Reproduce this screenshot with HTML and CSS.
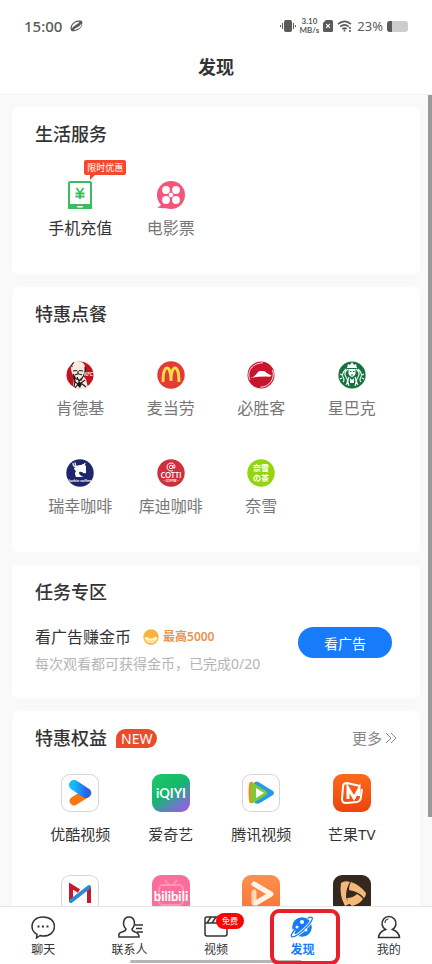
FILE: index.html
```html
<!DOCTYPE html>
<html lang="zh-CN">
    <head>
        <meta charset="UTF-8" />
        <meta name="viewport" content="width=device-width, initial-scale=1.0" />
        <title>发现</title>
        <link rel="stylesheet" href="styles.css">
    </head>
    <body>
        <header>
            <div class="status-bar">
                <span class="time">15:00</span>
                <svg class="leaf" width="13" height="12" viewBox="0 0 13 12" fill="#5a5a5a">
                    <path d="M1.500 11C-.5 9 .5 4.500 4 2.200 7 .3 11 .3 12 1.200c1 2 0 6-3 8s-6 2.600-7.500 1.800Z" />
                    <path d="M1.800 8.500C1.500 5 5 1.500 9.500 1.800 8.500 4 4.500 5 1.800 8.500ZM11.500 3.500c.3 4-4 6.500-8 6.300C5 8 9 7.500 11.500 3.500Z" fill="#fff" />
                </svg>
                <div class="status-right">
                    <svg width="16" height="14" viewBox="0 0 16 14" fill="#5a5a5a">
                        <rect x="4" y="1" width="8" height="12" rx="2" />
                        <path d="M2 4h1v6H2zM0 6h1v2H0zM13 4h1v6h-1zM15 6h1v2h-1z" />
                    </svg>
                    <span class="speed"><span>3.10</span><span>MB/s</span></span>
                    <svg width="10" height="12" viewBox="0 0 10 12">
                        <path d="M3 0h5.500Q10 0 10 1.500v9Q10 12 8.500 12h-7Q0 12 0 10.500V3Z" fill="#5a5a5a" />
                        <path d="m3.200 4.200 3.600 3.600m0-3.600L3.200 7.800" stroke="#fff" stroke-width="1.200" />
                    </svg>
                    <svg width="16" height="12" viewBox="0 0 16 12" fill="none" stroke="#5a5a5a" stroke-width="1.600">
                        <path d="M1 4.200q6.500-5.700 13 0M3.200 6.700q4.300-3.700 8.600 0M5.300 9q2.200-1.800 4.400 0" />
                        <path d="M7.500 9.500v2M13 7v2m0 1v2" />
                    </svg>
                    <span class="percent">23%</span>
                    <span class="battery"><span class="battery-level"></span></span>
                </div>
            </div>
            <h1>发现</h1>
        </header>

        <main>
            <section class="card">
                <h2>生活服务</h2>
                <div class="grid">
                    <a href="#" class="item dark">
                        <span class="tip">限时优惠</span>
                        <svg width="28" height="28" viewBox="0 0 28 28">
                            <rect x="2" y="0" width="24" height="29" rx="2" fill="#3ebb5c" />
                            <rect x="4" y="2" width="20" height="21" fill="#fff" />
                            <rect x="11" y="25" width="6" height="1.500" rx=".7" fill="#fff" />
                            <path d="m10.500 7 3.500 5L17.500 7M14 12v6M9.500 12.500h9M9.500 15.500h9" fill="none" stroke="#3ebb5c" stroke-width="1.800" />
                        </svg>
                        <span class="label">手机充值</span>
                    </a>
                    <a href="#" class="item">
                        <svg width="30" height="28" viewBox="0 0 30 28">
                            <circle cx="15" cy="14" r="14" fill="#f6557b" />
                            <path d="M1 26.500Q5 25 6 22l6 5Q6 27.500 1 26.500Z" fill="#f6557b" />
                            <g fill="#fff">
                                <circle cx="10" cy="9" r="3.900" />
                                <circle cx="20" cy="9" r="3.900" />
                                <circle cx="10" cy="19" r="3.900" />
                                <circle cx="20" cy="19" r="3.900" />
                                <circle cx="15" cy="14" r="2.300" />
                            </g>
                        </svg>
                        <span class="label">电影票</span>
                    </a>
                </div>
            </section>

            <section class="card">
                <h2>特惠点餐</h2>
                <div class="grid">
                    <a href="#" class="item">
                        <svg width="28" height="28" viewBox="0 0 28 28">
                            <circle cx="14" cy="14" r="13.500" fill="#c4121f" />
                            <path d="M5 8Q4 1 11 .5q7-.5 8 5 .5 5-2 9l3 4 2 8q-8 3.500-15-1l1-8q-2-4-3-9Z" fill="#f6ebe1" />
                            <path d="M6 6Q5 3 8 1.500M19 6q1 4-1 8l-3 5-5-1-3-5 2 7-1 6M7 10l4-.5m2 0 4 .5M9 14q3-2 7 0M12 10v3M11 16l2 4 3-3M19 19l-4 3 5 4M8 20l4 3-3 4" fill="none" stroke="#24191a" stroke-width="1.200" />
                            <path d="m13 20 3 3-2 4-3-3Z" fill="#24191a" />
                            <text class="logo-text" x="18" y="15" font-size="5" fill="#fff" font-style="italic">KFC</text>
                        </svg>
                        <span class="label">肯德基</span>
                    </a>
                    <a href="#" class="item">
                        <svg width="28" height="28" viewBox="0 0 28 28">
                            <circle cx="14" cy="14" r="13.700" fill="#e33b35" />
                            <path d="M6 21C6 13 7.500 7 10 7s4 6 4 13c0-7 1.500-13 4-13s4 6 4 14" fill="none" stroke="#fbdc4b" stroke-width="2.800" />
                        </svg>
                        <span class="label">麦当劳</span>
                    </a>
                    <a href="#" class="item">
                        <svg width="28" height="28" viewBox="0 0 28 28">
                            <circle cx="14" cy="14" r="13.500" fill="#c9152d" />
                            <path d="M3 19C-1 10 6 2 16 1.800M25.500 9c3 8-3 17-12 17.200" fill="none" stroke="#fff" stroke-width=".9" />
                            <path d="M3 17q5-1 8-6 1-1.500 4-1 4 0 4.500 2l5 2.500q-1 2-5 1l-8 .3Q7 16 3 17Z" fill="#fff" />
                        </svg>
                        <span class="label">必胜客</span>
                    </a>
                    <a href="#" class="item">
                        <svg width="28" height="28" viewBox="0 0 28 28">
                            <circle cx="14" cy="14" r="13.600" fill="#127341" />
                            <g fill="none" stroke="#fff" stroke-width="1.100">
                                <path d="M10 8Q5 12 8 16t0 8M8 8q-5 5-3 8t0 5M18 8q5 4 2 8t0 8M20 8q5 5 3 8t0 5M11 16q-2 4 0 9M17 16q2 4 0 9M2 13l2 1m0 3-2 1M26 13l-2 1m0 3 2 1" />
                            </g>
                            <path d="m9 7 1-4 2 1 2-3 2 3 2-1 1 4Z" fill="#fff" />
                            <path d="M10.500 8h7v5q-3.500 6-7 0Z" fill="#fff" />
                            <path d="M12 10.500h1.500m1.500 0h1.500M13 14h2" stroke="#127341" />
                            <path d="m12 17 2 2 2-2v5h-4Z" fill="#fff" />
                        </svg>
                        <span class="label">星巴克</span>
                    </a>
                    <a href="#" class="item">
                        <svg width="28" height="28" viewBox="0 0 28 28">
                            <circle cx="14" cy="14" r="13.700" fill="#20266d" />
                            <path d="M10 8q1-2 4-2 4-1 6 1v7q-2 1-4-1-3-1-3 1 1 3 5 4H10q-2-4 0-6-2-1-2-3Z" fill="#fff" />
                            <path d="M7 4q0 4 4 4M9 3.500q0 3 2 4M16 6q3 0 3-2" fill="none" stroke="#fff" stroke-width="1.200" />
                            <text class="logo-text" x="14" y="23" font-size="4" fill="#fff" text-anchor="middle">luckin coffee</text>
                        </svg>
                        <span class="label">瑞幸咖啡</span>
                    </a>
                    <a href="#" class="item">
                        <svg width="28" height="28" viewBox="0 0 28 28">
                            <circle cx="14" cy="14" r="13.700" fill="#d02f3b" />
                            <circle cx="14" cy="8" r="1.700" fill="none" stroke="#fff" />
                            <path d="M16 6v3q2 1 2-1.500a4 4 0 1 0-2 4" fill="none" stroke="#fff" />
                            <text class="logo-text" x="14" y="19" font-size="7" fill="#fff" text-anchor="middle">COTTI</text>
                            <text class="logo-text" x="14" y="23" font-size="3" fill="#fff" text-anchor="middle">– COFFEE –</text>
                        </svg>
                        <span class="label">库迪咖啡</span>
                    </a>
                    <a href="#" class="item">
                        <svg width="28" height="28" viewBox="0 0 28 28">
                            <circle cx="14" cy="14" r="13.700" fill="#93d50b" />
                            <text class="logo-text" x="14" y="12" font-size="8" fill="#fff" text-anchor="middle">奈雪</text>
                            <text class="logo-text" x="14" y="22" font-size="8" fill="#fff" text-anchor="middle">の茶</text>
                        </svg>
                        <span class="label">奈雪</span>
                    </a>
                </div>
            </section>

            <section class="card">
                <h2>任务专区</h2>
                <div class="task">
                    <div class="task-text">
                        <div class="task-name">
                            <span>看广告赚金币</span>
                            <svg width="16" height="16" viewBox="0 0 16 16">
                                <circle cx="8" cy="8" r="7.700" fill="#f9b43c" />
                                <path d="M1.500 9q1-1.500 3-1 1 1.500 3.500 1.500T11.500 8q2-.5 3 1-1.500 5-6.500 5T1.500 9Z" fill="#fff3c9" />
                                <path d="M4.500 11.500q3.500 2 7 0" fill="none" stroke="#fbcf72" />
                            </svg>
                            <span class="reward">最高5000</span>
                        </div>
                        <p>每次观看都可获得金币，已完成0/20</p>
                    </div>
                    <button type="button" class="watch">看广告</button>
                </div>
            </section>

            <section class="card">
                <div class="card-head">
                    <h2>特惠权益</h2>
                    <span class="new">NEW</span>
                    <a href="#" class="more">更多
                        <svg width="12" height="12" viewBox="0 0 12 12" fill="none" stroke="#888">
                            <path d="m1 1 5 5-5 5M6 1l5 5-5 5" />
                        </svg>
                    </a>
                </div>
                <div class="grid apps">
                    <a href="#" class="item">
                        <span class="app-icon outlined">
                            <svg width="38" height="38" viewBox="0 0 38 38">
                                <defs>
                                    <linearGradient id="youku">
                                        <stop offset="0" stop-color="#12bdfd" />
                                        <stop offset="1" stop-color="#2862ee" />
                                    </linearGradient>
                                </defs>
                                <path d="M13 27 26 19" stroke="#fb7611" stroke-width="9" stroke-linecap="round" />
                                <path d="m13 11 12 8" stroke="url(#youku)" stroke-width="10" stroke-linecap="round" />
                            </svg>
                        </span>
                        <span class="label">优酷视频</span>
                    </a>
                    <a href="#" class="item">
                        <span class="app-icon iqiyi">
                            <svg width="38" height="38" viewBox="0 0 38 38">
                                <text class="logo-text" x="19" y="24" font-size="13" fill="#fff" text-anchor="middle">iQIYI</text>
                            </svg>
                        </span>
                        <span class="label">爱奇艺</span>
                    </a>
                    <a href="#" class="item">
                        <span class="app-icon outlined">
                            <svg width="38" height="38" viewBox="0 0 38 38">
                                <path d="M12 9q2-3 6 0l13 8q2 2 0 4l-13 8q-4 2-6-1Z" fill="#259be8" />
                                <path d="M7 11q0-4 4-3 4 11 0 21-4 1-4-3Q6 18 7 11Z" fill="#f68a20" />
                                <path d="M9 10q1-2 4 0l11 7q2 2 0 4l-11 7q-3 2-4-1Z" fill="#77ce32" />
                                <path d="m14 14 8 5-8 5Z" fill="#fff" />
                            </svg>
                        </span>
                        <span class="label">腾讯视频</span>
                    </a>
                    <a href="#" class="item">
                        <span class="app-icon mango">
                            <svg width="38" height="38" viewBox="0 0 38 38" fill="none" stroke="#fff" stroke-width="2">
                                <path d="M27 12 14 9q-4 0-4 4l-1 12q0 4 4 4l11-1q4-1 4-6l1-7" />
                                <path d="M15 25V14l6 10 5-9v7" stroke-width="3" />
                            </svg>
                        </span>
                        <span class="label">芒果TV</span>
                    </a>
                    <a href="#" class="item">
                        <span class="app-icon outlined">
                            <svg width="38" height="38" viewBox="0 0 38 38" fill="none">
                                <path d="M10 27V11l8 5M28 12v16" stroke="#c8182c" stroke-width="4" />
                                <path d="M10 26 28 12" stroke="#2b8bd2" stroke-width="4" stroke-linecap="round" />
                            </svg>
                        </span>
                    </a>
                    <a href="#" class="item">
                        <span class="app-icon bili">
                            <svg width="38" height="38" viewBox="0 0 38 38">
                                <rect x="7" y="10" width="24" height="20" rx="4" fill="none" stroke="#ff94b6" stroke-width="2" />
                                <path d="m13 5 4 5m8-5-4 5" stroke="#ff94b6" stroke-width="2" />
                                <text class="logo-text" x="19" y="26" font-size="13" fill="#fff" text-anchor="middle">bilibili</text>
                            </svg>
                        </span>
                    </a>
                    <a href="#" class="item">
                        <span class="app-icon orange">
                            <svg width="38" height="38" viewBox="0 0 38 38" fill="none" stroke-width="5" stroke-linecap="round" stroke-linejoin="round">
                                <path d="M12 17v11" stroke="#ffd9b2" />
                                <path d="m12 9 17 10-15 9" stroke="#fff3e4" />
                            </svg>
                        </span>
                    </a>
                    <a href="#" class="item">
                        <span class="app-icon brown">
                            <svg width="38" height="38" viewBox="0 0 38 38" fill="#f4b878">
                                <path d="M8 8q4-3 9-1-4 6-4 15 1 4 5 6l-6 3Q6 20 8 8Z" />
                                <path d="M18 7q9 3 15 11 0 3-2 5-4-6-15-8 0-5 2-8Z" />
                                <path d="M30 24q-3 5-11 7-4-3-5-8 6 0 10-4 4 2 6 5Z" />
                            </svg>
                        </span>
                    </a>
                </div>
            </section>
            <div class="scroll-thumb"></div>
        </main>

        <nav>
            <a href="#" class="tab">
                <svg width="24" height="24" viewBox="0 0 24 24" fill="none" stroke="#333" stroke-width="1.500">
                    <path d="M6 19.500Q1 16.500 1 11.500C1 6 5 2 12 2s11.500 4 11.500 9.500S19 21 12 21q-2 0-3-.5L5.500 23Z" />
                    <path d="M6.500 11.500h2m2.500 0h2m2.500 0h2" stroke-width="2" />
                </svg>
                <span>聊天</span>
            </a>
            <a href="#" class="tab">
                <svg width="26" height="24" viewBox="0 0 26 24" fill="none" stroke="#333" stroke-width="1.500">
                    <path d="M9 14C5 10 6 2 12 2s7 8 3 12q0 2 3 3 4 1 4 5H2q-1-4 3-5 4-1 4-3Z" />
                    <path d="M18 10h8M19 13.500h6M20 17h6" />
                </svg>
                <span>联系人</span>
            </a>
            <a href="#" class="tab">
                <svg width="24" height="24" viewBox="0 0 24 24" fill="none" stroke="#333" stroke-width="1.500">
                    <rect x="1" y="2" width="22" height="19" rx="2" />
                    <path d="M1 8h22M3 8l4-6M8 8l4-6M13 8l4-6" />
                </svg>
                <span>视频</span>
                <span class="free">免费</span>
            </a>
            <a href="#" class="tab active">
                <svg width="24" height="24" viewBox="0 0 24 24">
                    <circle cx="12" cy="12" r="9.800" fill="#187bf5" />
                    <path d="M4.500 15C-1 22 1 24 8 19.500S24 5 22 2.500q-1.500-1-4.500 1" fill="none" stroke="#fff" stroke-width="3" />
                    <path d="M4.500 15C-1 22 1 24 8 19.500S24 5 22 2.500q-1.500-1-4.500 1" fill="none" stroke="#187bf5" stroke-width="1.300" />
                    <circle cx="12" cy="7" r="2" fill="#fff" />
                    <circle cx="7" cy="12" r="1.500" fill="#fff" />
                    <circle cx="16" cy="15" r="1.500" fill="#fff" />
                </svg>
                <span>发现</span>
            </a>
            <a href="#" class="tab">
                <svg width="24" height="24" viewBox="0 0 24 24" fill="none" stroke="#333" stroke-width="1.600">
                    <path d="M8.500 14.500a7 7 0 1 1 7 0Q22 17 22.500 22.500h-21Q2 17 8.500 14.500Z" />
                    <path d="M8 8q0-3.500 3.500-4" stroke-width="1.200" />
                </svg>
                <span>我的</span>
            </a>
            <div class="home-bar"></div>
        </nav>
    </body>
</html>
```
FILE: styles.css
```css
* {
    box-sizing: border-box;
}
body {
    font-family: "Noto Sans", "Noto Sans CJK SC", sans-serif;
    background-color: #f9f9f9;
    color: #333;
    display: flex;
    flex-direction: column;
    height: 100vh;
    margin: 0;
    overflow: hidden;
}
a {
    color: inherit;
    text-decoration: none;
}
svg {
    display: block;
    flex-shrink: 0;
}
h1,
h2,
p {
    margin: 0;
}
header {
    background-color: #fff;
    border-bottom: 1px solid #f2f2f2;
    flex-shrink: 0;
}
.status-bar {
    display: flex;
    align-items: center;
    height: 52px;
    padding: 0 24px;
    color: #5a5a5a;
}
.time {
    font-size: 15px;
    font-weight: 500;
}
.leaf {
    margin-left: 8px;
}
.status-right {
    display: flex;
    align-items: center;
    gap: 4px;
    margin-left: auto;
}
.speed {
    display: flex;
    flex-direction: column;
    align-items: center;
    font-family: Lato, sans-serif;
    font-size: 8px;
    font-weight: 700;
    line-height: 9px;
}
.percent {
    font-size: 13px;
}
.battery {
    width: 21px;
    height: 11px;
    border-radius: 3px;
    background-color: #ccc;
    overflow: hidden;
}
.battery-level {
    display: block;
    width: 23%;
    height: 100%;
    background-color: #5a5a5a;
}
h1 {
    height: 42px;
    font-size: 18px;
    font-weight: 700;
    line-height: 30px;
    text-align: center;
}
main {
    position: relative;
    display: flex;
    flex: 1;
    flex-direction: column;
    gap: 13px;
    min-height: 0;
    padding: 12px;
    overflow: hidden;
}
.card {
    flex-shrink: 0;
    padding: 15px 23px 34px;
    border-radius: 6px;
    background-color: #fff;
}
h2 {
    font-size: 18px;
    font-weight: 500;
    line-height: 24px;
}
.grid {
    display: grid;
    grid-template-columns: repeat(4, 1fr);
    row-gap: 39px;
    margin-top: 35px;
}
.item {
    position: relative;
    display: flex;
    flex-direction: column;
    align-items: center;
    gap: 7px;
    color: #777;
}
.item.dark {
    color: #333;
}
.label {
    font-size: 16px;
    line-height: 24px;
    white-space: nowrap;
}
.logo-text {
    font-family: Lato, "Noto Sans CJK SC", sans-serif;
    font-weight: 700;
}
.tip {
    position: absolute;
    top: -21px;
    left: calc(50% + 4px);
    padding: 0 3px;
    border-radius: 2px;
    background-color: #f5492f;
    color: #fff;
    font-size: 9px;
    line-height: 15px;
    white-space: nowrap;
}
.tip::after {
    content: "";
    position: absolute;
    top: 100%;
    left: 6px;
    border-top: 5px solid #f5492f;
    border-right: 5px solid transparent;
}
.task {
    display: flex;
    align-items: flex-start;
    justify-content: space-between;
    margin-top: 20px;
    padding-right: 5px;
}
.task-name {
    display: flex;
    align-items: center;
    font-size: 16px;
    line-height: 26px;
}
.task-name svg {
    margin: 0 4px 0 12px;
}
.reward {
    color: #e8924f;
    font-size: 12px;
    font-weight: 600;
}
.task p {
    color: #b5b5b5;
    font-size: 14px;
    line-height: 28px;
}
.card:has(.task) {
    padding-bottom: 20px;
}
.watch {
    width: 94px;
    height: 31px;
    margin-top: 3px;
    padding: 0;
    border: none;
    border-radius: 16px;
    background-color: #187bf9;
    color: #fff;
    font-family: inherit;
    font-size: 14px;
    cursor: pointer;
}
.card-head {
    display: flex;
    align-items: center;
}
.new {
    margin-left: 9px;
    padding: 0 5px;
    border-radius: 10px 10px 10px 0;
    background-color: #e94b2c;
    color: #fff;
    font-size: 14px;
    line-height: 19px;
}
.more {
    display: flex;
    align-items: center;
    gap: 3px;
    margin-left: auto;
    color: #888;
    font-size: 15px;
    line-height: 24px;
}
.apps {
    row-gap: 29px;
    margin-top: 24px;
}
.apps .item {
    gap: 10px;
    color: #333;
}
.apps .label {
    font-size: 15px;
}
.app-icon {
    width: 38px;
    height: 38px;
    border-radius: 9px;
    overflow: hidden;
}
.outlined {
    box-shadow: inset 0 0 0 1px #d5d5d5;
}
.iqiyi {
    background: linear-gradient(145deg, #20c468 10%, #10b96c 45%, #5c83b8 70%, #b04df0);
}
.mango {
    background: linear-gradient(#fb6a1c, #ee4310);
}
.bili {
    background-color: #fb6d9b;
}
.orange {
    background: linear-gradient(#fb9050, #fa7336);
}
.brown {
    background-color: #35281f;
}
.scroll-thumb {
    position: absolute;
    top: 0;
    right: 0;
    width: 4px;
    height: 89%;
    background-color: #9c989c;
}
nav {
    position: relative;
    display: flex;
    flex-shrink: 0;
    height: 58px;
    border-top: 1px solid #e5e5e5;
    background-color: #fff;
}
.tab {
    position: relative;
    display: flex;
    flex: 1;
    flex-direction: column;
    align-items: center;
    gap: 4px;
    padding-top: 8px;
    font-size: 12px;
    line-height: 14px;
}
.active {
    color: #187bf5;
    font-weight: 700;
}
.active::after {
    content: "";
    position: absolute;
    z-index: 1;
    top: 2px;
    right: 6px;
    bottom: -1px;
    left: 11px;
    border: 4px solid #e8202a;
    border-radius: 9px;
}
.free {
    position: absolute;
    top: 6px;
    left: 50%;
    padding: 0 6px;
    border-radius: 8px;
    background-color: #f90505;
    color: #fff;
    font-size: 8px;
    line-height: 16px;
}
.home-bar {
    position: absolute;
    bottom: 1px;
    left: 30%;
    width: 40%;
    height: 3px;
    border-radius: 2px;
    background-color: #b5b5b5;
}
```
